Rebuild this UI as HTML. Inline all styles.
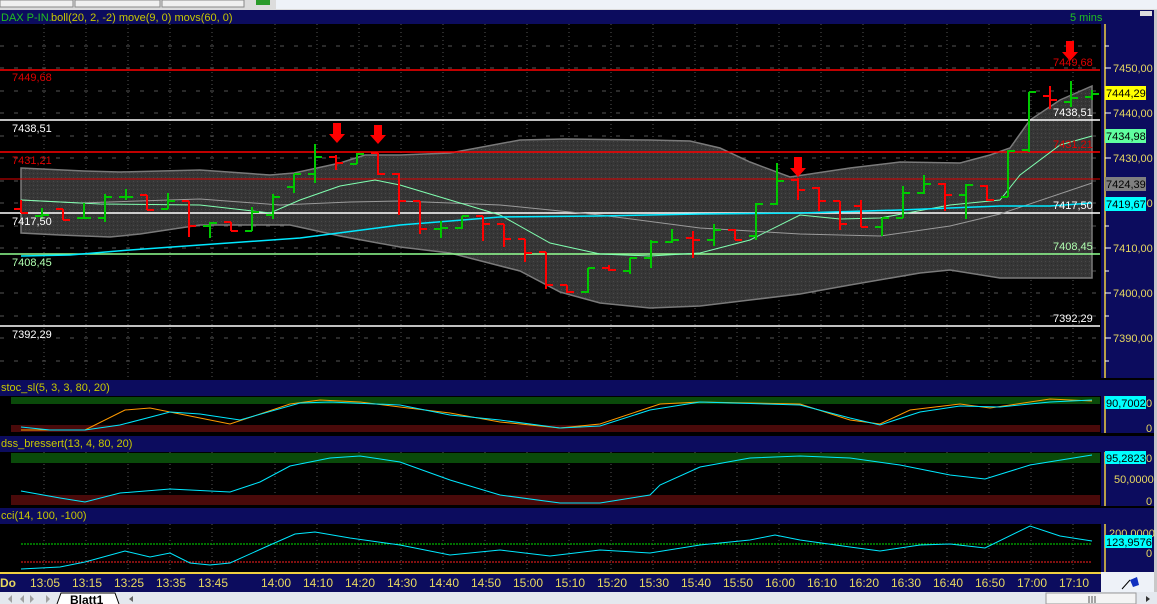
<!DOCTYPE html>
<html><head><meta charset="utf-8"><style>
html,body{margin:0;padding:0;background:#000;}
body{width:1157px;height:604px;overflow:hidden;position:relative;font-family:"Liberation Sans",sans-serif;}
svg{position:absolute;left:0;top:0;}
text{font-family:"Liberation Sans",sans-serif;font-size:11px;}
</style></head><body>
<svg width="1157" height="604" viewBox="0 0 1157 604">
<defs>
<pattern id="dots" width="4" height="4" patternUnits="userSpaceOnUse"><rect width="4" height="4" fill="#363636"/><rect x="1" y="1" width="1" height="1" fill="#4a4a4a"/><rect x="3" y="3" width="1" height="1" fill="#2a2a2a"/></pattern>
</defs>
<rect x="0" y="0" width="1157" height="10" fill="#dcdcdc"/>
<rect x="0" y="0" width="73" height="7" fill="#f0f0f0" stroke="#888" stroke-width="1"/>
<rect x="75" y="0" width="85" height="7" fill="#f0f0f0" stroke="#888" stroke-width="1"/>
<rect x="162" y="0" width="82" height="7" fill="#f0f0f0" stroke="#888" stroke-width="1"/>
<rect x="256" y="0" width="14" height="5" fill="#2a9a2a"/>
<rect x="276" y="0" width="881" height="9" fill="#eef2f8"/>
<rect x="1154" y="10" width="3" height="582" fill="#c8c8c8"/>
<rect x="0" y="10" width="1154" height="14" fill="#0c0c5e"/>
<text x="1" y="21" fill="#20c020">DAX P-IN.</text>
<text x="51" y="21" fill="#c8c800">boll(20, 2, -2) move(9, 0) movs(60, 0)</text>
<text x="1070" y="21" fill="#20c020">5 mins</text>
<rect x="1140" y="11" width="12" height="5" fill="#ddd"/>
<rect x="0" y="24" width="1101" height="354" fill="#000"/>
<g stroke="#555" stroke-width="1" stroke-dasharray="1,3">
<path d="M44 24V378M86 24V378M128 24V378M170 24V378M212 24V378M275 24V378M317 24V378M359 24V378M401 24V378M443 24V378M485 24V378M527 24V378M569 24V378M611 24V378M653 24V378M695 24V378M737 24V378M779 24V378M821 24V378M863 24V378M905 24V378M947 24V378M989 24V378M1031 24V378M1073 24V378"/>
</g>
<g stroke="#555" stroke-width="1" stroke-dasharray="4,10">
<path d="M0 46H1100M0 91H1100M0 136H1100M0 181H1100M0 226H1100M0 271H1100M0 316H1100M0 361H1100M0 68H1100M0 113H1100M0 158H1100M0 203H1100M0 248H1100M0 293H1100M0 338H1100"/>
</g>
<path d="M21 168 L84 171 L120 172 L200 170 L270 175 L294 173 L340 163 L365 155 L400 155 L450 153 L520 140 L565 139 L650 140 L690 141 L720 148 L750 162 L790 177 L850 168 L900 162 L960 163 L990 155 L1010 148 L1030 120 L1060 100 L1092 86 L1092 278 L1000 278 L950 270 L920 273 L850 285 L800 294 L750 300 L700 306 L650 308 L600 303 L560 292 L520 271 L450 253 L400 247 L340 236 L290 225 L200 225 L140 234 L110 237 L60 235 L21 233 Z" fill="url(#dots)" stroke="#7a7a7a" stroke-width="1.5"/>
<path d="M0 70H1100" stroke="#ff0000" stroke-width="1.5"/>
<path d="M0 120H1100" stroke="#fff" stroke-width="1.5"/>
<path d="M0 152H1100" stroke="#ff0000" stroke-width="1.5"/>
<path d="M0 179H1100" stroke="#e00000" stroke-width="1"/>
<path d="M0 213H1100" stroke="#fff" stroke-width="1.5"/>
<path d="M0 254H1100" stroke="#90ff90" stroke-width="1.5"/>
<path d="M0 326H1100" stroke="#fff" stroke-width="1.5"/>
<path d="M21 200 L80 203 L200 199 L280 205 L350 202 L400 201 L500 205 L600 215 L700 228 L800 234 L880 236 L950 226 L1000 214 L1092 183" fill="none" stroke="#9a9a9a" stroke-width="1"/>
<path d="M21 200 L100 204 L200 205 L270 213 L300 200 L340 186 L375 180 L400 185 L450 200 L500 215 L550 243 L600 254 L650 256 L700 253 L750 240 L800 215 L840 219 L880 218 L950 205 L1000 200 L1020 175 L1060 145 L1092 136" fill="none" stroke="#80ffb0" stroke-width="1"/>
<path d="M21 256 L70 255 L130 250 L200 245 L300 238 L400 225 L500 217 L600 216 L700 214 L800 213 L900 210 L1000 206 L1050 206 L1092 203" fill="none" stroke="#00e8ff" stroke-width="1.5"/>
<g stroke="#00c800" stroke-width="2" fill="none">
<path d="M42 208V219M35 216H42M42 215H49"/>
<path d="M84 203V219M77 218H84M84 218H91"/>
<path d="M105 194V222M98 218H105M105 197H112"/>
<path d="M126 189V200M119 197H126M126 197H133"/>
<path d="M168 193V209M161 209H168M168 201H175"/>
<path d="M210 222V238M203 226H210M210 223H217"/>
<path d="M252 207V231M245 231H252M252 212H259"/>
<path d="M273 194V219M266 215H273M273 197H280"/>
<path d="M294 174V193M287 187H294M294 174H301"/>
<path d="M315 144V183M308 174H315M315 157H322"/>
<path d="M357 153V164M350 164H357M357 154H364"/>
<path d="M441 221V238M434 229H441M441 228H448"/>
<path d="M462 216V229M455 228H462M462 216H469"/>
<path d="M588 268V293M581 292H588M588 268H595"/>
<path d="M630 258V274M623 271H630M630 258H637"/>
<path d="M651 240V268M644 258H651M651 242H658"/>
<path d="M672 229V243M665 242H672M672 240H679"/>
<path d="M714 224V246M707 240H714M714 230H721"/>
<path d="M756 203V240M749 236H756M756 204H763"/>
<path d="M777 163V205M770 204H777M777 181H784"/>
<path d="M882 218V236M875 227H882M882 218H889"/>
<path d="M903 186V218M896 218H903M903 193H910"/>
<path d="M924 175V194M917 193H924M924 184H931"/>
<path d="M966 184V219M959 195H966M966 185H973"/>
<path d="M1008 150V197M1001 197H1008M1008 151H1015"/>
<path d="M1029 92V152M1022 150H1029M1029 92H1036"/>
<path d="M1071 81V107M1064 102H1071M1071 98H1078"/>
<path d="M1092 90V100M1085 97H1092M1092 94H1099"/>
</g>
<g stroke="#ff0000" stroke-width="2" fill="none">
<path d="M21 200V213M14 209H21M21 213H28"/>
<path d="M63 209V220M56 209H63M63 220H70"/>
<path d="M147 195V210M140 195H147M147 210H154"/>
<path d="M189 201V237M182 201H189M189 226H196"/>
<path d="M231 222V231M224 222H231M231 231H238"/>
<path d="M336 155V170M329 157H336M336 163H343"/>
<path d="M378 153V175M371 153H378M378 174H385"/>
<path d="M399 173V215M392 174H399M399 201H406"/>
<path d="M420 201V234M413 201H420M420 229H427"/>
<path d="M483 216V241M476 216H483M483 224H490"/>
<path d="M504 224V247M497 224H504M504 239H511"/>
<path d="M525 239V262M518 239H525M525 253H532"/>
<path d="M546 252V289M539 252H546M546 285H553"/>
<path d="M567 285V293M560 285H567M567 292H574"/>
<path d="M609 265V271M602 268H609M609 270H616"/>
<path d="M693 231V258M686 238H693M693 240H700"/>
<path d="M735 229V240M728 230H735M735 240H742"/>
<path d="M798 178V200M791 180H798M798 190H805"/>
<path d="M819 187V211M812 188H819M819 201H826"/>
<path d="M840 201V230M833 201H840M840 224H847"/>
<path d="M861 200V227M854 206H861M861 227H868"/>
<path d="M945 183V211M938 184H945M945 195H952"/>
<path d="M987 185V201M980 186H987M987 200H994"/>
<path d="M1050 86V109M1043 96H1050M1050 100H1057"/>
</g>
<g fill="#ff0000">
<path d="M333 123H341V134H345L337 143L329 134H333Z"/>
<path d="M374 125H382V135H386L378 144L370 135H374Z"/>
<path d="M794 157H802V168H806L798 177L790 168H794Z"/>
<path d="M1066 41H1074V52H1078L1070 61L1062 52H1066Z"/>
</g>
<text x="12" y="81" fill="#e00000">7449,68</text>
<text x="12" y="132" fill="#fff">7438,51</text>
<text x="12" y="164" fill="#e00000">7431,21</text>
<text x="12" y="225" fill="#fff">7417,50</text>
<text x="12" y="266" fill="#b0ffb0">7408,45</text>
<text x="12" y="338" fill="#fff">7392,29</text>
<text x="1053" y="66" fill="#e00000">7449,68</text>
<text x="1053" y="116" fill="#fff">7438,51</text>
<text x="1053" y="148" fill="#e00000">7431,21</text>
<text x="1053" y="209" fill="#fff">7417,50</text>
<text x="1053" y="250" fill="#b0ffb0">7408,45</text>
<text x="1053" y="322" fill="#fff">7392,29</text>
<rect x="1101" y="24" width="53" height="354" fill="#0c0c5e"/>
<path d="M1105 24V378" stroke="#f0d040" stroke-width="1.5"/>
<g stroke="#fff" stroke-width="1"><path d="M1105 46H1109M1105 68H1111M1105 91H1109M1105 113H1111M1105 136H1109M1105 158H1111M1105 181H1109M1105 203H1111M1105 226H1109M1105 248H1111M1105 271H1109M1105 293H1111M1105 316H1109M1105 338H1111M1105 361H1109"/></g>
<g fill="#e8d860">
<text x="1113" y="72">7450,00</text>
<text x="1113" y="117">7440,00</text>
<text x="1113" y="162">7430,00</text>
<text x="1113" y="207">7420,00</text>
<text x="1113" y="252">7410,00</text>
<text x="1113" y="297">7400,00</text>
<text x="1113" y="342">7390,00</text>
</g>
<rect x="1105" y="86" width="41" height="14" fill="#ffff00"/><text x="1106" y="97" fill="#000">7444,29</text>
<rect x="1105" y="129" width="41" height="14" fill="#60ffa0"/><text x="1106" y="140" fill="#000">7434,98</text>
<rect x="1105" y="177" width="41" height="14" fill="#808080"/><text x="1106" y="188" fill="#000">7424,39</text>
<rect x="1105" y="197" width="41" height="14" fill="#00ffff"/><text x="1106" y="208" fill="#000">7419,67</text>
<rect x="0" y="378" width="1154" height="2" fill="#000"/>
<rect x="0" y="380" width="1154" height="16" fill="#0c0c5e"/>
<text x="1" y="391" fill="#c8c800">stoc_sl(5, 3, 3, 80, 20)</text>
<rect x="0" y="396" width="1101" height="37" fill="#000"/>
<rect x="11" y="397" width="1089" height="7" fill="#0a4a0a"/>
<rect x="11" y="425" width="1089" height="7" fill="#4a0a0a"/>
<path d="M21 430 L85 430 L125 410 L150 408 L200 418 L230 424 L290 404 L320 400 L360 402 L400 407 L450 413 L500 422 L560 428 L600 424 L660 404 L700 402 L800 404 L850 420 L880 424 L910 410 L960 404 L990 408 L1050 399 L1092 401" fill="none" stroke="#ff9a00" stroke-width="1"/>
<path d="M21 427 L50 430 L85 430 L120 425 L170 412 L200 414 L240 420 L300 403 L330 402 L400 405 L450 415 L500 420 L560 428 L600 426 L650 410 L700 402 L800 405 L850 418 L880 425 L920 412 L960 406 L1000 407 L1050 402 L1092 400" fill="none" stroke="#00e8ff" stroke-width="1"/>
<rect x="1101" y="396" width="53" height="37" fill="#0c0c5e"/>
<path d="M1105 396V433" stroke="#f0d040" stroke-width="1.5"/>
<rect x="1105" y="396" width="41" height="13" fill="#00ffff"/><text x="1106" y="407" fill="#000">90,7002</text>
<text x="1146" y="407" fill="#e8d860">0</text>
<text x="1146" y="432" fill="#e8d860">0</text>
<rect x="0" y="433" width="1154" height="3" fill="#000"/>
<rect x="0" y="436" width="1154" height="16" fill="#0c0c5e"/>
<text x="1" y="447" fill="#c8c800">dss_bressert(13, 4, 80, 20)</text>
<rect x="0" y="452" width="1101" height="54" fill="#000"/>
<g stroke="#555" stroke-dasharray="1,3"><path d="M44 452V506M86 452V506M128 452V506M170 452V506M212 452V506M275 452V506M317 452V506M359 452V506M401 452V506M443 452V506M485 452V506M527 452V506M569 452V506M611 452V506M653 452V506M695 452V506M737 452V506M779 452V506M821 452V506M863 452V506M905 452V506M947 452V506M989 452V506M1031 452V506M1073 452V506"/></g>
<rect x="11" y="453" width="1089" height="10" fill="#0a4a0a"/>
<rect x="11" y="495" width="1089" height="10" fill="#4a0a0a"/>
<path d="M21 491 L60 498 L85 502 L120 493 L170 489 L230 492 L260 482 L290 466 L330 458 L360 456 L400 462 L450 480 L500 495 L560 503 L600 503 L650 495 L660 485 L700 467 L750 458 L800 456 L850 458 L900 465 L950 475 L985 479 L1030 465 L1092 455" fill="none" stroke="#00e8ff" stroke-width="1"/>
<rect x="1101" y="452" width="53" height="54" fill="#0c0c5e"/>
<path d="M1105 452V506" stroke="#f0d040" stroke-width="1.5"/>
<rect x="1105" y="451" width="41" height="13" fill="#00ffff"/><text x="1106" y="462" fill="#000">95,2823</text>
<text x="1146" y="462" fill="#e8d860">0</text>
<text x="1114" y="483" fill="#e8d860">50,0000</text>
<text x="1146" y="505" fill="#e8d860">0</text>
<rect x="0" y="506" width="1154" height="2" fill="#000"/>
<rect x="0" y="508" width="1154" height="16" fill="#0c0c5e"/>
<text x="1" y="519" fill="#c8c800">cci(14, 100, -100)</text>
<rect x="0" y="524" width="1101" height="48" fill="#000"/>
<g stroke="#555" stroke-dasharray="1,3"><path d="M44 524V572M86 524V572M128 524V572M170 524V572M212 524V572M275 524V572M317 524V572M359 524V572M401 524V572M443 524V572M485 524V572M527 524V572M569 524V572M611 524V572M653 524V572M695 524V572M737 524V572M779 524V572M821 524V572M863 524V572M905 524V572M947 524V572M989 524V572M1031 524V572M1073 524V572"/></g>
<path d="M21 544H1092" stroke="#00e000" stroke-width="1" stroke-dasharray="2,1"/>
<path d="M21 562H1092" stroke="#ff2020" stroke-width="1" stroke-dasharray="2,1"/>
<path d="M21 569 L60 567 L85 562 L125 551 L150 557 L170 553 L190 563 L210 565 L230 563 L270 545 L295 534 L315 532 L350 538 L400 545 L450 555 L500 550 L550 556 L600 550 L650 553 L700 545 L750 540 L775 535 L800 540 L850 547 L880 551 L920 545 L950 544 L985 548 L1030 526 L1060 536 L1092 541" fill="none" stroke="#00e8ff" stroke-width="1"/>
<rect x="1101" y="524" width="53" height="48" fill="#0c0c5e"/>
<path d="M1105 524V572" stroke="#f0d040" stroke-width="1.5"/>
<text x="1109" y="537" fill="#e8d860">200,0000</text>
<rect x="1105" y="535" width="47" height="13" fill="#00ffff"/><text x="1106" y="546" fill="#000">123,9576</text>
<text x="1146" y="557" fill="#e8d860">0</text>
<rect x="0" y="572" width="1101" height="2" fill="#f0d040"/>
<rect x="0" y="574" width="1101" height="18" fill="#0c0c5e"/>
<rect x="1101" y="572" width="53" height="20" fill="#eef2f8"/>
<path d="M1122 589L1130 580" stroke="#000"/><path d="M1130 580L1137 577L1139 585L1133 587Z" fill="#1030c0"/>
<g fill="#e8d860">
<text x="0" y="587" font-weight="bold" style="font-size:12px">Do</text>
<text x="30" y="587" style="font-size:12px">13:05</text>
<text x="72" y="587" style="font-size:12px">13:15</text>
<text x="114" y="587" style="font-size:12px">13:25</text>
<text x="156" y="587" style="font-size:12px">13:35</text>
<text x="198" y="587" style="font-size:12px">13:45</text>
<text x="261" y="587" style="font-size:12px">14:00</text>
<text x="303" y="587" style="font-size:12px">14:10</text>
<text x="345" y="587" style="font-size:12px">14:20</text>
<text x="387" y="587" style="font-size:12px">14:30</text>
<text x="429" y="587" style="font-size:12px">14:40</text>
<text x="471" y="587" style="font-size:12px">14:50</text>
<text x="513" y="587" style="font-size:12px">15:00</text>
<text x="555" y="587" style="font-size:12px">15:10</text>
<text x="597" y="587" style="font-size:12px">15:20</text>
<text x="639" y="587" style="font-size:12px">15:30</text>
<text x="681" y="587" style="font-size:12px">15:40</text>
<text x="723" y="587" style="font-size:12px">15:50</text>
<text x="765" y="587" style="font-size:12px">16:00</text>
<text x="807" y="587" style="font-size:12px">16:10</text>
<text x="849" y="587" style="font-size:12px">16:20</text>
<text x="891" y="587" style="font-size:12px">16:30</text>
<text x="933" y="587" style="font-size:12px">16:40</text>
<text x="975" y="587" style="font-size:12px">16:50</text>
<text x="1017" y="587" style="font-size:12px">17:00</text>
<text x="1059" y="587" style="font-size:12px">17:10</text>
</g>
<rect x="0" y="592" width="1157" height="12" fill="#e4e8ee"/>
<g fill="#a0a0a0"><path d="M12 595L8 599L12 603Z"/><path d="M24 595L20 599L24 603Z"/><path d="M30 595L34 599L30 603Z"/><path d="M46 595L50 599L46 603Z"/></g>
<path d="M57 604L61 593H115L119 604" fill="#fff" stroke="#000"/>
<text x="70" y="604" fill="#000" font-weight="bold" style="font-size:12px">Blatt1</text>
<path d="M133 596L129 599L133 602Z" fill="#666"/>
<rect x="1046" y="593" width="90" height="11" fill="#f4f4f4" stroke="#999"/>
<path d="M1089 596V603M1092 596V603M1095 596V603" stroke="#555"/>
<path d="M1146 596L1150 599L1146 602Z" fill="#333"/>
</svg>
</body></html>
